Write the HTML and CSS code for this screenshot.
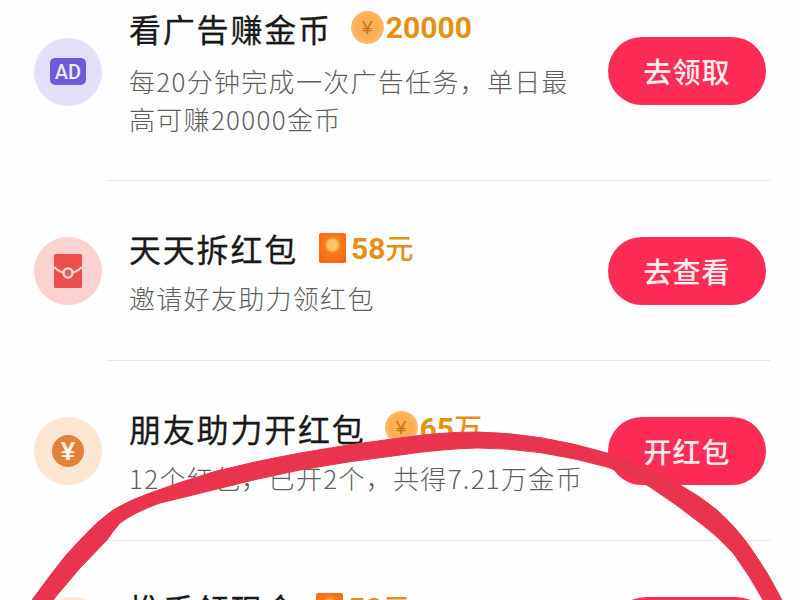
FILE: index.html
```html
<!DOCTYPE html>
<html lang="zh-CN">
<head>
<meta charset="utf-8">
<title>任务列表</title>
<link rel="stylesheet" href="styles.css">
</head>
<body>
<main class="list">
  <section class="row row-tall">
    <div class="icon icon-ad"><span class="ad-badge">AD</span></div>
    <div class="body">
      <div class="text">
        <div class="head"><h2 class="title">看广告赚金币</h2><span class="coin">¥</span><span class="value">20000</span></div>
        <p class="sub sub-tall">每20分钟完成一次广告任务，单日最<br>高可赚20000金币</p>
      </div>
      <button class="btn">去领取</button>
    </div>
  </section>
  <section class="row">
    <div class="icon icon-packet">
      <svg class="packet-svg" viewBox="0 0 28 34" width="28" height="34">
        <rect width="28" height="34" rx="1.5" fill="#ea4f4b"/>
        <path d="M0 13 Q6 19 14 19 Q22 19 28 13" fill="none" stroke="#f8cfcb" stroke-width="2.2"/>
        <circle cx="14" cy="19" r="4.6" fill="#e4605e" stroke="#f9dcd8" stroke-width="2.4"/>
      </svg>
    </div>
    <div class="body">
      <div class="text">
        <div class="head"><h2 class="title">天天拆红包</h2><span class="note"></span><span class="value">58<span class="unit">元</span></span></div>
        <p class="sub">邀请好友助力领红包</p>
      </div>
      <button class="btn">去查看</button>
    </div>
  </section>
  <section class="row">
    <div class="icon icon-yuan"><span class="yuan">¥</span></div>
    <div class="body">
      <div class="text">
        <div class="head"><h2 class="title">朋友助力开红包</h2><span class="coin">¥</span><span class="value">65<span class="unit">万</span></span></div>
        <p class="sub">12个红包，已开2个，共得7.21万金币</p>
      </div>
      <button class="btn">开红包</button>
    </div>
  </section>
  <section class="row row-last">
    <div class="icon icon-hand"></div>
    <div class="body">
      <div class="text">
        <div class="head"><h2 class="title">推手领现金</h2><span class="note"></span><span class="value">58<span class="unit">元</span></span></div>
      </div>
      <button class="btn btn-last"></button>
    </div>
  </section>
</main>
<svg class="scribble" viewBox="0 0 800 600" width="800" height="600" aria-hidden="true">
  <path fill="#e8344c" stroke="#e8344c" stroke-width="1" stroke-linejoin="round" d="M32 600 L52 573 Q66 554 80 540 Q96 522 113 510 Q130 500 150 493 Q180 482 213 472 Q255 461 300 453 Q350 444 400 438 Q440 432 477 432 Q540 433 607 453 Q645 466 680 485 Q700 496 717 510 Q736 527 750 547 Q768 572 782 600 L763 600 Q750 576 733 553 Q718 536 700 523 Q676 504 650 487 Q630 475 607 467 Q540 448 477 448 Q440 449 400 455 Q350 461 300 470 Q255 479 213 490 Q185 497 160 503 Q135 512 120 523 Q113 531 107 540 L80 568 L53 600 Z"/>
</svg>
</body>
</html>
```
FILE: styles.css
```css
* { box-sizing: border-box; }
html, body { margin: 0; height: 100%; }
body {
  width: 800px;
  height: 600px;
  overflow: hidden;
  position: relative;
  background: #fefefe;
  font-family: "Noto Sans CJK SC", "Noto Sans", sans-serif;
}
.list { margin-top: -38px; }
.row {
  display: flex;
  align-items: center;
  height: 180px;
  padding-left: 34px;
}
.row-tall { height: 219px; }
.icon {
  flex: none;
  display: flex;
  align-items: center;
  justify-content: center;
  width: 68px;
  height: 68px;
  border-radius: 50%;
}
.icon-ad { background: #e3dff7; }
.icon-packet { background: #fbd2d0; }
.icon-yuan { background: #fae6d2; }
.icon-hand { background: #fae6d2; margin-left: 4px; }
.ad-badge {
  display: flex;
  align-items: center;
  justify-content: center;
  width: 36px;
  height: 27px;
  border-radius: 5px;
  background: #6f5bd8;
  color: #ece9fb;
  font: 500 20px/1 Roboto, "Liberation Sans", sans-serif;
}
.packet-svg { display: block; }
.yuan {
  display: flex;
  align-items: center;
  justify-content: center;
  width: 32px;
  height: 32px;
  border-radius: 50%;
  background: #e5803a;
  color: #fff6ea;
  font: 700 26px/1 "Liberation Sans", sans-serif;
}
.body {
  flex: none;
  display: flex;
  align-items: center;
  justify-content: space-between;
  align-self: stretch;
  width: 663px;
  margin-left: 5px;
  padding: 0 4px 0 22px;
  border-bottom: 1px solid #e6e6e6;
}
.text {
  display: flex;
  flex-direction: column;
  padding-top: 2px;
}
.head {
  display: flex;
  align-items: center;
  height: 44px;
}
.title {
  margin: 0;
  color: #1a1a1a;
  font-size: 32px;
  font-weight: 400;
  line-height: 44px;
  letter-spacing: 1.8px;
  -webkit-text-stroke: 0.3px #1a1a1a;
  white-space: nowrap;
}
.coin {
  flex: none;
  display: flex;
  align-items: center;
  justify-content: center;
  width: 33px;
  height: 33px;
  margin-left: 19px;
  border-radius: 50%;
  background: radial-gradient(circle at 50% 48%, #fcae52 0 48%, #f9bb68 66%, #fde2ae 100%);
  color: #c4741a;
  font: 400 19px/1 "Liberation Sans", sans-serif;
}
.note {
  flex: none;
  width: 27px;
  height: 30px;
  margin-left: 21px;
  border-radius: 2px;
  background: radial-gradient(circle at 50% 40%, #fdc46a 0 5px, #fb7a1c 8px, #f75f10 100%);
}
.value {
  margin-left: 2px;
  color: #e59014;
  font: 700 30px/44px Roboto, "Liberation Sans", sans-serif;
  white-space: nowrap;
}
.note + .value { margin-left: 5px; }
.unit {
  font-family: "Noto Sans CJK SC", sans-serif;
  font-size: 28px;
  font-weight: 500;
}
.sub {
  margin: 9.5px 0 0;
  color: #5f5f5f;
  font-size: 26px;
  font-weight: 300;
  line-height: 38px;
  letter-spacing: 1.3px;
  white-space: nowrap;
}
.sub-tall { margin-top: 12.5px; }
.btn {
  flex: none;
  width: 158px;
  height: 68px;
  padding: 0;
  border: 0;
  border-radius: 34px;
  background: #fd2c55;
  color: #fdecef;
  font-family: inherit;
  font-size: 28px;
  font-weight: 500;
  letter-spacing: 1px;
}
.row-last .text { min-height: 93px; margin-left: -4px; }
.row-last .note { margin-left: 18px; }
.btn-last { height: 68px; }
.scribble {
  position: absolute;
  left: 0;
  top: 0;
  pointer-events: none;
}
```
